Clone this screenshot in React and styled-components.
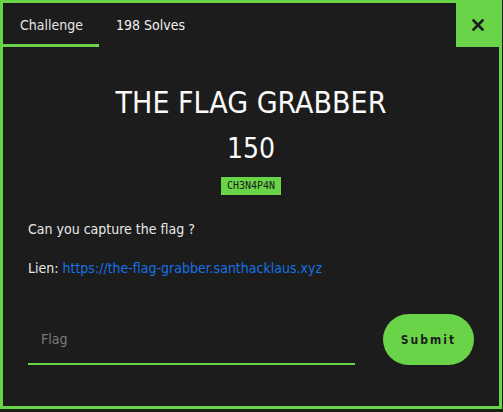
import React from "react";
import styled, { createGlobalStyle } from "styled-components";

const green = "#69d447";
const dark = "#1c1c1c";
const font = `"Liberation Sans Narrow", "DejaVu Sans Condensed", "Roboto", sans-serif`;

const Global = createGlobalStyle`
  html, body { margin: 0; padding: 0; background: #17220f; }
  body { font-family: ${font}; }
  * { box-sizing: border-box; }
`;

const Modal = styled.div`
  width: 502px;
  height: 409px;
  border: 3px solid ${green};
  background: ${dark};
  display: flex;
  flex-direction: column;
`;

const Header = styled.div`
  display: flex;
  align-items: stretch;
  height: 44px;
`;

const Tab = styled.div`
  padding: 3px 16px 0 17px;
  display: flex;
  align-items: center;
  font-size: 14px;
  color: ${(p) => (p.$active ? "#e6e6e6" : "#f0f0f0")};
  border-bottom: 3px solid ${(p) => (p.$active ? green : "transparent")};
`;

const Spacer = styled.div`
  flex: 1;
`;

const Close = styled.button`
  width: 43px;
  border: none;
  background: ${green};
  display: flex;
  align-items: center;
  justify-content: center;
  padding: 0;
  cursor: pointer;
`;

const Body = styled.div`
  flex: 1;
  display: flex;
  flex-direction: column;
  padding: 37px 25px 0 25px;
`;

const Title = styled.h1`
  margin: 0;
  text-align: center;
  font-size: 30px;
  font-weight: 400;
  letter-spacing: 0;
  color: #fafafa;
  line-height: 38px;
`;

const Points = styled.div`
  margin-top: 11px;
  text-align: center;
  font-size: 28px;
  color: #fafafa;
  line-height: 32px;
`;

const TagRow = styled.div`
  display: flex;
  justify-content: center;
  margin-top: 12px;
`;

const Tag = styled.span`
  background: ${green};
  color: #1c1c1c;
  font-family: "DejaVu Sans Mono", monospace;
  font-size: 10px;
  padding: 3px 6px;
  line-height: 12px;
  height: 18px;
`;

const Text = styled.p`
  margin: ${(p) => p.$mt}px 0 0 0;
  font-size: 14px;
  color: #e8e8e8;
  line-height: 20px;
`;

const Link = styled.a`
  color: #1473e6;
  text-decoration: none;
`;

const Form = styled.form`
  margin-top: 36px;
  display: flex;
  align-items: center;
  gap: 28px;
`;

const Input = styled.input`
  width: 327px;
  height: 51px;
  background: transparent;
  border: none;
  border-bottom: 2px solid ${green};
  padding: 0 13px;
  font-family: ${font};
  font-size: 14px;
  color: #eee;
  outline: none;
  &::placeholder { color: #7a7a7a; }
`;

const Submit = styled.button`
  width: 91px;
  height: 51px;
  border: none;
  border-radius: 26px;
  background: ${green};
  color: #1c1c1c;
  font-family: ${font};
  font-weight: 700;
  font-size: 12px;
  letter-spacing: 2px;
  cursor: pointer;
`;

export default function App() {
  return (
    <>
      <Global />
      <Modal>
        <Header>
          <Tab $active>Challenge</Tab>
          <Tab>198 Solves</Tab>
          <Spacer />
          <Close aria-label="close">
            <svg width="12" height="12" viewBox="0 0 12 12">
              <path d="M1.5 1.5 L10.5 10.5 M10.5 1.5 L1.5 10.5" stroke="#1c1c1c" strokeWidth="2.6" strokeLinecap="square" />
            </svg>
          </Close>
        </Header>
        <Body>
          <Title>THE FLAG GRABBER</Title>
          <Points>150</Points>
          <TagRow>
            <Tag>CH3N4P4N</Tag>
          </TagRow>
          <Text $mt={24}>Can you capture the flag ?</Text>
          <Text $mt={19}>
            Lien: <Link href="#">https://the-flag-grabber.santhacklaus.xyz</Link>
          </Text>
          <Form onSubmit={(e) => e.preventDefault()}>
            <Input placeholder="Flag" />
            <Submit type="submit">Submit</Submit>
          </Form>
        </Body>
      </Modal>
    </>
  );
}
